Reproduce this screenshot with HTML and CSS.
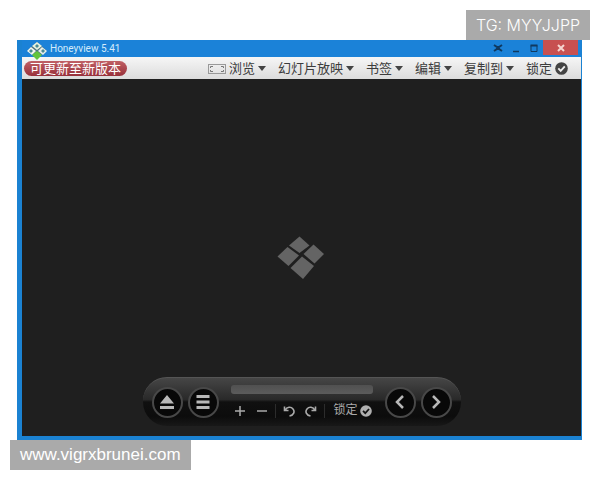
FILE: index.html
```
<!DOCTYPE html>
<html lang="zh-CN">
<head>
    <meta charset="UTF-8">
    <meta name="viewport" content="width=device-width, initial-scale=1.0">
    <title>Honeyview 5.41</title>
    <link rel="stylesheet" href="styles.css">
</head>
<body>
    <div class="tag tag-top">TG: MYYJJPP</div>

    <div class="window">
        <!-- 标题栏 -->
        <header class="titlebar">
            <svg class="app-icon" width="22" height="20" viewBox="0 0 22 20">
                <path d="M11 1l9 8-9 8-9-8z" fill="#4d7580"/>
                <path d="M11 1l5 4-5 4-5-4z" fill="#e9f2df"/>
                <path d="M5 6l5 4-4 4-5-4z" fill="#f3f6ee"/>
                <path d="M16 6l5 4-4 4-5-4z" fill="#e8efe9"/>
                <path d="M11 3l2 2-2 2-2-2zM5 8l2 2-2 2-2-2zM17 8l2 2-2 2-2-2z" fill="#4b8b94"/>
                <path d="M11 10l5 4-5 5-5-5z" fill="#62c43c"/>
            </svg>
            <h1 class="title">Honeyview 5.41</h1>
            <div class="window-buttons">
                <button class="win-btn" aria-label="置顶">
                    <svg width="10" height="10" viewBox="0 0 10 10"><path d="M1 2l3 2h2l3-2M1 8l3-2h2l3 2M3 5h4" fill="none" stroke="#10395f" stroke-width="2"/></svg>
                </button>
                <button class="win-btn" aria-label="最小化">
                    <svg width="10" height="10" viewBox="0 0 10 10"><path d="M2 8.500h6" stroke="#10395f" stroke-width="1.500"/></svg>
                </button>
                <button class="win-btn" aria-label="最大化">
                    <svg width="10" height="10" viewBox="0 0 10 10"><path d="M2 2.500h6v6H2z" fill="none" stroke="#10395f"/><path d="M1.500 2.500h7" stroke="#10395f" stroke-width="2"/></svg>
                </button>
                <button class="win-btn close" aria-label="关闭">
                    <svg width="10" height="10" viewBox="0 0 10 10"><path d="M2 2l6 6M8 2L2 8" stroke="#f5d5cf" stroke-width="2"/></svg>
                </button>
            </div>
        </header>

        <!-- 工具栏 -->
        <nav class="toolbar">
            <button class="update">可更新至新版本</button>
            <div class="menu">
                <button class="menu-item">
                    <svg width="18" height="12" viewBox="0 0 18 12"><rect x=".5" y="1.500" width="17" height="9" fill="none" stroke="#999"/><path d="M2.500 5V3.500h2.500M13 3.500h2.500V5M15.500 7v1.500H13M5 8.500H2.500V7" fill="none" stroke="#777"/></svg>
                    浏览<span class="caret"></span>
                </button>
                <button class="menu-item">幻灯片放映<span class="caret"></span></button>
                <button class="menu-item">书签<span class="caret"></span></button>
                <button class="menu-item">编辑<span class="caret"></span></button>
                <button class="menu-item">复制到<span class="caret"></span></button>
                <button class="menu-item">锁定
                    <svg width="13" height="13" viewBox="0 0 13 13"><circle cx="6.500" cy="6.500" r="6.300" fill="#444"/><path d="M3.300 6.300l2.400 2.500 4.100-4.500" fill="none" stroke="#eee" stroke-width="1.900"/></svg>
                </button>
            </div>
        </nav>

        <!-- 图片区域 -->
        <main class="viewer">
            <div class="canvas">
                <svg class="logo" width="50" height="44" viewBox="0 0 50 44">
                    <g fill="#646464">
                        <path d="M22.500 .5l10 9-10 7.500-10.500-7.500z"/>
                        <path d="M36.500 8.500L47 18l-9.500 9.500-11-9.500z"/>
                        <path d="M10.500 11L22 19.500 11.500 30 .5 20.500z"/>
                        <path d="M25 20.500l12 9.500L26 43 13.500 32z"/>
                    </g>
                </svg>
            </div>

            <!-- 底部控制条 -->
            <div class="controls">
                <button class="round" aria-label="打开">
                    <svg width="16" height="16" viewBox="0 0 16 16"><path d="M8 1l7 8.500H1zM1 12h14v3H1z" fill="#b8b8b8"/></svg>
                </button>
                <button class="round" aria-label="菜单">
                    <svg width="16" height="16" viewBox="0 0 16 16"><path d="M1.500 1h13v3h-13zM1.500 6.500h13v3h-13zM1.500 12h13v3h-13z" fill="#b8b8b8"/></svg>
                </button>
                <div class="center">
                    <div class="progress"></div>
                    <div class="tools">
                        <button class="tool" aria-label="放大">
                            <svg width="12" height="12" viewBox="0 0 12 12"><path d="M6 1v10M1 6h10" stroke="#aaa" stroke-width="1.500"/></svg>
                        </button>
                        <button class="tool" aria-label="缩小">
                            <svg width="12" height="12" viewBox="0 0 12 12"><path d="M1 6h10" stroke="#aaa" stroke-width="1.500"/></svg>
                        </button>
                        <span class="divider"></span>
                        <button class="tool" aria-label="向左旋转">
                            <svg width="12" height="12" viewBox="0 0 12 12"><path d="M1.500 1.500v4h4M2 5.500C4 1.500 8 1.500 10 4s1 6-3.500 7" fill="none" stroke="#aaa" stroke-width="1.600"/></svg>
                        </button>
                        <button class="tool" aria-label="向右旋转">
                            <svg width="12" height="12" viewBox="0 0 12 12"><path d="M10.500 1.500v4h-4M10 5.500C8 1.500 4 1.500 2 4s-1 6 3.500 7" fill="none" stroke="#aaa" stroke-width="1.600"/></svg>
                        </button>
                        <span class="divider"></span>
                        <button class="tool lock">
                            锁定
                            <svg width="12" height="12" viewBox="0 0 13 13"><circle cx="6.500" cy="6.500" r="6.300" fill="#b0b0b0"/><path d="M3.300 6.300l2.400 2.500 4.100-4.500" fill="none" stroke="#111" stroke-width="1.900"/></svg>
                        </button>
                    </div>
                </div>
                <button class="round" aria-label="上一张">
                    <svg width="16" height="16" viewBox="0 0 16 16"><path d="M11 2L5 8l6 6" fill="none" stroke="#b8b8b8" stroke-width="2.500"/></svg>
                </button>
                <button class="round" aria-label="下一张">
                    <svg width="16" height="16" viewBox="0 0 16 16"><path d="M5 2l6 6-6 6" fill="none" stroke="#b8b8b8" stroke-width="2.500"/></svg>
                </button>
            </div>
        </main>
    </div>

    <a class="tag tag-bottom" href="#">www.vigrxbrunei.com</a>
</body>
</html>
```
FILE: styles.css
```
* {
    box-sizing: border-box;
}

body {
    margin: 0;
    min-height: 100vh;
    padding: 10px;
    display: flex;
    flex-direction: column;
    background-color: #ffffff;
    font-family: "Liberation Sans", "Noto Sans CJK SC", sans-serif;
}

button {
    margin: 0;
    padding: 0;
    border: none;
    background: none;
    font-family: inherit;
    color: inherit;
    cursor: pointer;
}

svg {
    display: block;
    flex-shrink: 0;
}

/* 角落标签 */
.tag {
    height: 30px;
    line-height: 30px;
    padding: 0 10px;
    background-color: #aaaaaa;
    color: #ffffff;
    text-decoration: none;
    white-space: nowrap;
}

.tag-top {
    align-self: flex-end;
    font-family: Inter, sans-serif;
    font-size: 16px;
    font-weight: 300;
}

.tag-bottom {
    align-self: flex-start;
    font-size: 17px;
}

/* 窗口 */
.window {
    flex: 1;
    margin: 0 8px 0 7px;
    display: flex;
    flex-direction: column;
    border: solid #1b82d2;
    border-width: 0 1px 4px 5px;
    background-color: #1f1f1f;
}

.titlebar {
    height: 17px;
    display: flex;
    align-items: center;
    padding-left: 4px;
    background-color: #1b82d8;
}

.app-icon {
    position: relative;
    z-index: 1;
    align-self: flex-start;
    margin-top: 1px;
}

.title {
    margin: 0 0 0 2px;
    font-family: Roboto, sans-serif;
    font-size: 10px;
    font-weight: 400;
    line-height: 17px;
    color: #d3ebfb;
}

.window-buttons {
    margin-left: auto;
    padding-right: 3px;
    display: flex;
    align-self: flex-start;
}

.win-btn {
    width: 18px;
    height: 15px;
    display: flex;
    align-items: center;
    justify-content: center;
}

.win-btn.close {
    width: 35px;
    background-color: #c75050;
}

/* 工具栏 */
.toolbar {
    height: 22px;
    display: flex;
    align-items: center;
    justify-content: space-between;
    padding: 0 13px 0 2px;
    background: linear-gradient(#f6f6f6, #dcdcdc);
}

.update {
    height: 15px;
    padding: 0 6px;
    border-radius: 8px;
    background: linear-gradient(#c06065, #98303a);
    color: #ffffff;
    font-size: 13px;
    line-height: 15px;
}

.menu {
    display: flex;
    gap: 12px;
    padding-top: 1px;
}

.menu-item {
    display: flex;
    align-items: center;
    gap: 3px;
    font-size: 13px;
    line-height: 21px;
    color: #3c3c3c;
    white-space: nowrap;
}

.caret {
    border: solid transparent;
    border-width: 5px 4px 0;
    border-top-color: #444444;
}

/* 图片区域 */
.viewer {
    flex: 1;
    display: flex;
    flex-direction: column;
    align-items: center;
    padding-bottom: 10px;
}

.canvas {
    flex: 1;
    display: flex;
    align-items: center;
    padding-top: 60px;
}

/* 底部控制条 */
.controls {
    display: flex;
    align-items: center;
    gap: 5px;
    height: 49px;
    padding: 0 9px;
    border-radius: 24px;
    border-top: 1px solid #555555;
    background: linear-gradient(#464646, #292929 45%, #101010 50%, #0c0c0c 80%, #181818);
}

.round {
    width: 31px;
    height: 31px;
    display: flex;
    align-items: center;
    justify-content: center;
    border: 2px solid #484848;
    border-radius: 50%;
    background-color: #080808;
}

.center {
    width: 142px;
    margin: 0 7px;
    display: flex;
    flex-direction: column;
    gap: 8px;
}

.progress {
    height: 9px;
    border-radius: 3px;
    background: linear-gradient(#505050, #5c5c5c);
}

.tools {
    display: flex;
    align-items: center;
    gap: 10px;
    padding-left: 3px;
}

.tool {
    height: 17px;
    display: flex;
    align-items: center;
}

.divider {
    width: 1px;
    height: 14px;
    margin: 0 -3px;
    flex-shrink: 0;
    background-color: #2c2c2c;
}

.lock {
    gap: 2px;
    padding-left: 2px;
    font-size: 12px;
    line-height: 17px;
    color: #aaaaaa;
    white-space: nowrap;
}
```
